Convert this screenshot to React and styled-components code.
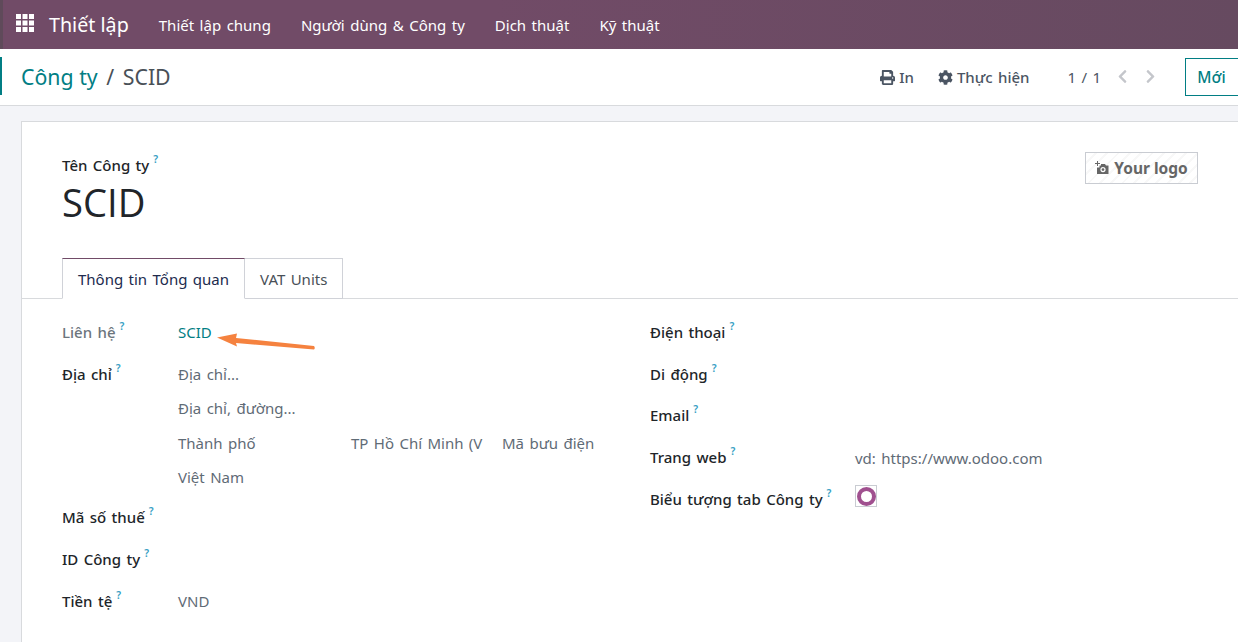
import React from "react";
import styled, { createGlobalStyle } from "styled-components";
import { FaPrint, FaCog, FaChevronLeft, FaChevronRight } from "react-icons/fa";

const Global = createGlobalStyle`
  html, body { margin: 0; padding: 0; height: 100%; overflow: hidden; background: #fff; }
  #root { height: 100%; }
  * { box-sizing: border-box; }
  body { font-family: "Noto Sans", "Open Sans", sans-serif; font-size: 15px; color: #374151; word-spacing: 1.5px; }
`;

const Page = styled.div`
  height: 642px;
  display: flex;
  flex-direction: column;
  overflow: hidden;
`;

const Navbar = styled.header`
  height: 49px;
  flex: none;
  display: flex;
  align-items: center;
  padding-left: 16px;
  color: #fff;
  background: linear-gradient(90deg, #5f4a5a 0, #5f4a5a 3px, #714b67 3px, #714b67 40%, #664a60 100%);
`;

const AppsIcon = styled.svg`
  width: 18px;
  height: 18px;
  fill: #fff;
  margin-right: 15px;
  margin-top: -4px;
`;

const Brand = styled.span`
  font-size: 19.7px;
  word-spacing: 0;
  margin-right: 30px;
`;

const NavItem = styled.span`
  font-size: 15px;
  word-spacing: 1.6px;
  margin-right: 30px;
`;

const ControlPanel = styled.div`
  height: 57px;
  flex: none;
  display: flex;
  align-items: center;
  background: #fff;
  border-bottom: 1px solid #d8dadd;
  padding-left: 21px;
  position: relative;
  &::before {
    content: "";
    position: absolute;
    left: 0;
    top: 8px;
    width: 1.5px;
    height: 38px;
    background: #017e84;
  }
`;

const Breadcrumb = styled.div`
  font-size: 21.3px;
  flex: 1;
  color: #495057;
  word-spacing: 0;
  margin-top: -2px;
`;

const Crumb = styled.span`
  color: #017e84;
`;

const Slash = styled.span`
  margin: 0 3px;
`;

const Action = styled.span`
  display: inline-flex;
  align-items: center;
  gap: 4px;
  font-size: 15px;
  font-weight: 500;
  color: #4b5563;
  margin-right: ${(p) => p.$gap}px;
  svg { font-size: 15px; }
`;

const Pager = styled.span`
  font-size: 15px;
  color: #4b5563;
  margin-right: 14px;
`;

const PagerArrow = styled.span`
  display: inline-flex;
  color: #c4c6cb;
  font-size: 15px;
  margin-top: -2px;
  margin-right: ${(p) => p.$gap}px;
`;

const NewButton = styled.button`
  width: 54px;
  height: 38px;
  margin-right: -1px;
  border: 1px solid #017e84;
  border-right: none;
  background: #fff;
  color: #017e84;
  font: 500 15.5px "Noto Sans", sans-serif;
  padding: 0 2px 0 0;
  text-align: center;
`;

const Main = styled.main`
  flex: 1;
  min-height: 0;
  display: flex;
  background: #f3f4f8;
  padding: 15px 0 0 21px;
`;

const Sheet = styled.section`
  flex: 1;
  background: #fff;
  border: 1px solid #d8dadd;
  border-width: 1px 0 0 1px;
  position: relative;
`;

const SheetHead = styled.div`
  display: flex;
  justify-content: space-between;
  padding: 32px 40px 0 40px;
  height: 136px;
`;

const FieldLabel = styled.div`
  font-size: 15px;
  font-weight: 500;
  color: #212529;
  line-height: 22px;
`;

const Help = styled.sup`
  font-size: 10.5px;
  font-weight: 600;
  color: #3a9fc4;
  margin-left: 4px;
  line-height: 0;
  position: relative;
  vertical-align: baseline;
  top: -8px;
`;

const Title = styled.div`
  font-family: "Open Sans", sans-serif;
  font-size: 38.2px;
  color: #212529;
  line-height: 52px;
`;

const LogoBox = styled.div`
  width: 113px;
  height: 32px;
  margin-top: -2px;
  border: 1px solid #c9ccd2;
  display: flex;
  align-items: center;
  justify-content: center;
  gap: 5px;
  color: #666;
  font-weight: 700;
  font-size: 15.5px;
  word-spacing: 0;
  background: repeating-linear-gradient(135deg, #fff, #fff 6px, #f8f8f8 6px, #f8f8f8 8px);
`;

const CameraIcon = styled.svg`
  width: 14px;
  height: 14px;
  fill: #666;
  flex: none;
`;

const TabBar = styled.div`
  display: flex;
  height: 41px;
  padding-left: 40px;
  border-bottom: 1px solid #d8dadd;
`;

const Tab = styled.div`
  height: 41px;
  display: flex;
  align-items: center;
  padding: 0 15px;
  font-size: 15px;
  color: ${(p) => (p.$active ? "#212b4e" : "#495057")};
  background: #fff;
  border: 1px solid #d0d2d8;
  border-left-width: ${(p) => (p.$active ? "1px" : "0")};
  border-top-color: ${(p) => (p.$active ? "#714b67" : "#d0d2d8")};
  border-bottom-color: ${(p) => (p.$active ? "#fff" : "#d0d2d8")};
`;

const Columns = styled.div`
  display: grid;
  grid-template-columns: 588px 1fr;
  padding: 22px 0 0 40px;
`;

const Column = styled.div`
  display: flex;
  flex-direction: column;
`;

const Row = styled.div`
  display: grid;
  grid-template-columns: ${(p) => p.$label}px 1fr;
  min-height: ${(p) => p.$h}px;
  line-height: 22px;
`;

const RowLabel = styled.div`
  font-size: 15px;
  font-weight: 500;
  color: ${(p) => (p.$muted ? "#6c757d" : "#212529")};
  line-height: 22px;
`;

const Value = styled.div`
  font-size: 15px;
  color: ${(p) => p.$color || "#5f6b76"};
  line-height: 22px;
  white-space: nowrap;
  margin-top: ${(p) => p.$top || 0}px;
`;

const AddressStack = styled.div`
  display: flex;
  flex-direction: column;
  gap: 12.3px;
`;

const CityRow = styled.div`
  display: grid;
  grid-template-columns: 173px 151px 1fr;
`;

const Favicon = styled.div`
  width: 22px;
  height: 22px;
  border: 1px solid #c9ccd2;
  display: flex;
  align-items: center;
  justify-content: center;
  margin-top: -3px;
`;

const Ring = styled.div`
  width: 19px;
  height: 19px;
  border-radius: 50%;
  border: 4px solid #a0508f;
`;

const ArrowMark = styled.svg`
  position: absolute;
  left: 190px;
  top: 205px;
  width: 110px;
  height: 30px;
`;

const label = (text, muted) => (
  <RowLabel $muted={muted}>
    {text}
    <Help>?</Help>
  </RowLabel>
);

export default function App() {
  return (
    <Page>
      <Global />
      <Navbar>
        <AppsIcon viewBox="0 0 18 18">
          {[0, 6.5, 13].map((y) =>
            [0, 6.5, 13].map((x) => <rect key={`${x}-${y}`} x={x} y={y} width="5" height="5" />)
          )}
        </AppsIcon>
        <Brand>Thiết lập</Brand>
        <NavItem>Thiết lập chung</NavItem>
        <NavItem>Người dùng &amp; Công ty</NavItem>
        <NavItem>Dịch thuật</NavItem>
        <NavItem>Kỹ thuật</NavItem>
      </Navbar>
      <ControlPanel>
        <Breadcrumb>
          <Crumb>Công ty</Crumb> <Slash>/</Slash> SCID
        </Breadcrumb>
        <Action $gap={24}>
          <FaPrint />
          In
        </Action>
        <Action $gap={38}>
          <FaCog />
          Thực hiện
        </Action>
        <Pager>1 / 1</Pager>
        <PagerArrow $gap={13}>
          <FaChevronLeft />
        </PagerArrow>
        <PagerArrow $gap={27}>
          <FaChevronRight />
        </PagerArrow>
        <NewButton>Mới</NewButton>
      </ControlPanel>
      <Main>
        <Sheet>
          <SheetHead>
            <div>
              <FieldLabel>
                Tên Công ty<Help>?</Help>
              </FieldLabel>
              <Title>SCID</Title>
            </div>
            <LogoBox>
              <CameraIcon viewBox="0 0 14 14">
                <path d="M2 0h1v2h2v1H3v2H2V3H0V2h2z" />
                <path fillRule="evenodd" d="M6 3h4l1 1.5h2.5V13H2V6.5h2.5V4.5H6zM8 6a2.6 2.6 0 1 0 0 5.2A2.6 2.6 0 0 0 8 6zm0 1.2a1.4 1.4 0 1 1 0 2.8 1.4 1.4 0 0 1 0-2.8z" />
              </CameraIcon>
              Your logo
            </LogoBox>
          </SheetHead>
          <TabBar>
            <Tab $active>Thông tin Tổng quan</Tab>
            <Tab>VAT Units</Tab>
          </TabBar>
          <Columns>
            <Column>
              <Row $label={116} $h={42}>
                {label("Liên hệ", true)}
                <Value $color="#017e84">SCID</Value>
              </Row>
              <Row $label={116} $h={143}>
                {label("Địa chỉ")}
                <AddressStack>
                  <Value>Địa chỉ...</Value>
                  <Value>Địa chỉ, đường...</Value>
                  <CityRow>
                    <Value>Thành phố</Value>
                    <Value>TP Hồ Chí Minh (V</Value>
                    <Value>Mã bưu điện</Value>
                  </CityRow>
                  <Value>Việt Nam</Value>
                </AddressStack>
              </Row>
              <Row $label={116} $h={42}>
                {label("Mã số thuế")}
                <Value />
              </Row>
              <Row $label={116} $h={42}>
                {label("ID Công ty")}
                <Value />
              </Row>
              <Row $label={116} $h={42}>
                {label("Tiền tệ")}
                <Value>VND</Value>
              </Row>
            </Column>
            <Column>
              <Row $label={205} $h={42}>
                {label("Điện thoại")}
                <Value />
              </Row>
              <Row $label={205} $h={41}>
                {label("Di động")}
                <Value />
              </Row>
              <Row $label={205} $h={42}>
                {label("Email")}
                <Value />
              </Row>
              <Row $label={205} $h={42}>
                {label("Trang web")}
                <Value $top={1}>vd: https://www.odoo.com</Value>
              </Row>
              <Row $label={205} $h={42}>
                {label("Biểu tượng tab Công ty")}
                <Favicon>
                  <Ring />
                </Favicon>
              </Row>
            </Column>
          </Columns>
          <ArrowMark viewBox="0 0 110 30">
            <path d="M5 10.5 L25 6.5 L24 11 L102 19 Q103.5 21 102 22.5 L24 16 L25 19.5 Z" fill="#f5823f" />
          </ArrowMark>
        </Sheet>
      </Main>
    </Page>
  );
}
